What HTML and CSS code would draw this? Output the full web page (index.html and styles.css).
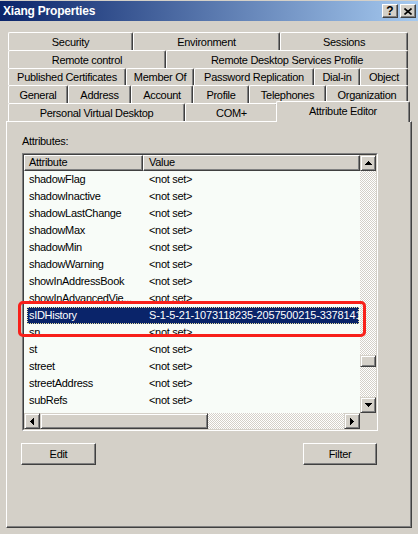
FILE: index.html
```html
<!DOCTYPE html>
<html>
<head>
<meta charset="utf-8">
<title>Xiang Properties</title>
<link rel="stylesheet" href="styles.css">
</head>
<body>
<div class="titlebar">
  <span class="title">Xiang Properties</span>
  <div class="tbtns">
    <span class="tbtn q">?</span>
    <span class="tbtn"><svg width="8" height="7" viewBox="0 0 8 7"><path d="M0.5 0.5 L7.5 6.5 M7.5 0.5 L0.5 6.5" stroke="#000" stroke-width="1.6" fill="none"/></svg></span>
  </div>
</div>
<div class="tabs">
  <div class="trow r1"><div class="tab">Security</div><div class="tab">Environment</div><div class="tab">Sessions</div></div>
  <div class="trow r2"><div class="tab">Remote control</div><div class="tab">Remote Desktop Services Profile</div></div>
  <div class="trow r3"><div class="tab">Published Certificates</div><div class="tab">Member Of</div><div class="tab">Password Replication</div><div class="tab">Dial-in</div><div class="tab">Object</div></div>
  <div class="trow r4"><div class="tab">General</div><div class="tab">Address</div><div class="tab">Account</div><div class="tab">Profile</div><div class="tab">Telephones</div><div class="tab">Organization</div></div>
  <div class="trow r5"><div class="tab">Personal Virtual Desktop</div><div class="tab">COM+</div><div class="tab sel">Attribute Editor</div></div>
</div>
<div class="panel">
  <div class="label">Attributes:</div>
  <div class="listbox">
    <div class="lbin">
      <div class="ltop">
        <div class="lview">
          <div class="lhead"><div class="hc hc1">Attribute</div><div class="hc hc2">Value</div></div>
          <div class="lrows">
            <div class="lr"><span class="nm">shadowFlag</span><span class="vl">&lt;not set&gt;</span></div>
            <div class="lr"><span class="nm">shadowInactive</span><span class="vl">&lt;not set&gt;</span></div>
            <div class="lr"><span class="nm">shadowLastChange</span><span class="vl">&lt;not set&gt;</span></div>
            <div class="lr"><span class="nm">shadowMax</span><span class="vl">&lt;not set&gt;</span></div>
            <div class="lr"><span class="nm">shadowMin</span><span class="vl">&lt;not set&gt;</span></div>
            <div class="lr"><span class="nm">shadowWarning</span><span class="vl">&lt;not set&gt;</span></div>
            <div class="lr"><span class="nm">showInAddressBook</span><span class="vl">&lt;not set&gt;</span></div>
            <div class="lr"><span class="nm">showInAdvancedVie...</span><span class="vl">&lt;not set&gt;</span></div>
            <div class="lr sel"><span class="nm">sIDHistory</span><span class="vl sid">S-1-5-21-1073118235-2057500215-3378141234-1105</span></div>
            <div class="lr"><span class="nm">sn</span><span class="vl">&lt;not set&gt;</span></div>
            <div class="lr"><span class="nm">st</span><span class="vl">&lt;not set&gt;</span></div>
            <div class="lr"><span class="nm">street</span><span class="vl">&lt;not set&gt;</span></div>
            <div class="lr"><span class="nm">streetAddress</span><span class="vl">&lt;not set&gt;</span></div>
            <div class="lr"><span class="nm">subRefs</span><span class="vl">&lt;not set&gt;</span></div>
            <div class="lr"><span class="nm">subSchemaSubEntry</span><span class="vl">CN=Aggregate,CN=Schema</span></div>
          </div>
        </div>
        <div class="vs">
          <div class="sb"><svg width="7" height="4" viewBox="0 0 7 4"><polygon points="3.5,0 7,4 0,4" fill="#000"/></svg></div>
          <div class="vtrack"><div class="sb vthumb"></div></div>
          <div class="sb"><svg width="7" height="4" viewBox="0 0 7 4"><polygon points="0,0 7,0 3.5,4" fill="#000"/></svg></div>
        </div>
      </div>
      <div class="lbot">
        <div class="hs">
          <div class="sb"><svg width="4" height="7" viewBox="0 0 4 7"><polygon points="4,0 4,7 0,3.5" fill="#000"/></svg></div>
          <div class="htrack"><div class="sb hthumb"></div></div>
          <div class="sb"><svg width="4" height="7" viewBox="0 0 4 7"><polygon points="0,0 0,7 4,3.5" fill="#000"/></svg></div>
        </div>
        <div class="corner"></div>
      </div>
    </div>
  </div>
  <div class="btns"><div class="btn edit">Edit</div><div class="btn filter">Filter</div></div>
  <div class="redmark"></div>
</div>
</body>
</html>
```
FILE: styles.css
```css
* { box-sizing: border-box; }
html, body { margin: 0; padding: 0; }
body {
  width: 418px; height: 534px; overflow: hidden;
  background: #d4d0c8;
  font-family: "Liberation Sans", Arial, sans-serif;
  font-size: 11px; letter-spacing: -0.3px; color: #000;
}
.titlebar {
  margin-top: 1px; height: 20px;
  background: linear-gradient(to right, #0a246a, #a6caf0);
  display: flex; align-items: center; justify-content: space-between;
  padding: 0 2px 0 3px;
}
.title { color: #fff; font-weight: bold; font-size: 12px; letter-spacing: -0.2px; }
.tbtns { display: flex; gap: 2px; }
.tbtn {
  width: 16px; height: 14px; background: #d4d0c8;
  border: 1px solid; border-color: #fff #404040 #404040 #fff;
  box-shadow: inset -1px -1px #808080;
  display: flex; align-items: center; justify-content: center;
}
.tbtn.q { font-weight: bold; font-size: 12px; line-height: 12px; letter-spacing: 0; }

.tabs { margin-top: 11px; padding-left: 8px; width: 412px; display: flex; flex-direction: column; }
.trow { display: grid; height: 18px; }
.r3 { height: 17px; }
.r1 { grid-template-columns: 125px 147px 128px; }
.r2 { grid-template-columns: 158px 242px; }
.r3 { grid-template-columns: 118px 68px 120px 46px 48px; }
.r4 { grid-template-columns: 60px 63px 62px 56px 77px 82px; }
.r5 { grid-template-columns: 177px 93px 130px; }
.tab {
  border-top: 1px solid #fff; border-left: 1px solid #fff; border-right: 1px solid #404040;
  box-shadow: inset -1px 0 #808080;
  border-radius: 2px 2px 0 0;
  display: flex; align-items: center; justify-content: center;
  white-space: nowrap; background: #d4d0c8;
}
.tab.sel {
  position: relative; z-index: 3;
  margin: -2px -2px 0 -2px; height: 21px; align-self: start;
  padding-bottom: 2px;
}

.panel {
  position: relative;
  margin-left: 6px; width: 406px; height: 407px;
  border: 1px solid; border-color: #fff #404040 #404040 #fff;
  box-shadow: inset -1px -1px #808080;
  padding: 13px 0 0 15px;
}
.label { line-height: 13px; height: 13px; margin-bottom: 5px; }
.listbox {
  width: 356px; height: 278px;
  border: 1px solid; border-color: #808080 #fff #fff #808080;
}
.lbin {
  height: 100%;
  border: 1px solid; border-color: #404040 #d4d0c8 #d4d0c8 #404040;
  display: flex; flex-direction: column; background: #f8fcf8;
}
.ltop { display: flex; height: 258px; }
.lview { width: 336px; display: flex; flex-direction: column; overflow: hidden; }
.lhead { display: flex; height: 16px; flex: none; background: #d4d0c8; }
.hc {
  border: 1px solid; border-color: #fff #404040 #404040 #fff;
  box-shadow: inset -1px -1px #808080;
  line-height: 13px; white-space: nowrap;
}
.hc1 { width: 119px; padding-left: 4px; }
.hc2 { flex: 1; padding-left: 5px; }
.lrows { flex: 1; overflow: hidden; }
.lr { display: flex; height: 17px; line-height: 17px; margin: 0 1px 0 3px; white-space: nowrap; }
.nm { width: 116px; flex: none; padding-left: 2px; overflow: hidden; }
.vl { flex: 1; padding-left: 6px; overflow: hidden; }
.vl.sid { letter-spacing: -0.15px; }
.lr.sel { background: #0a246a; color: #fff; outline: 1px dotted #e8e0a0; outline-offset: -1px; }

.sb {
  width: 16px; height: 16px; flex: none; background: #d4d0c8;
  border: 1px solid; border-color: #d4d0c8 #404040 #404040 #d4d0c8;
  box-shadow: inset 1px 1px #fff, inset -1px -1px #808080;
  display: flex; align-items: center; justify-content: center;
}
.sb svg { display: block; shape-rendering: crispEdges; }
.vtrack, .htrack {
  background-color: #fff;
  background-image: conic-gradient(#d4d0c8 25%, #fff 0 50%, #d4d0c8 0 75%, #fff 0);
  background-size: 2px 2px;
}
.vs { width: 16px; display: flex; flex-direction: column; }
.vtrack { flex: 1; }
.vthumb { margin-top: 184px; height: 12px; }
.lbot { display: flex; height: 16px; }
.hs { width: 336px; display: flex; }
.htrack { flex: 1; display: flex; }
.hthumb { width: 168px; }
.corner { width: 16px; background: #d4d0c8; }

.btns { display: flex; justify-content: space-between; width: 356px; margin: 12px 0 0 -1px; }
.btn {
  height: 22px;
  border: 1px solid; border-color: #fff #404040 #404040 #fff;
  box-shadow: inset -1px -1px #808080;
  display: flex; align-items: center; justify-content: center;
}
.edit { width: 75px; }
.filter { width: 74px; }

.redmark {
  position: absolute; left: 11px; top: 179px;
  width: 348px; height: 36px;
  border: 3px solid #f8201a; border-radius: 5px;
}
```
